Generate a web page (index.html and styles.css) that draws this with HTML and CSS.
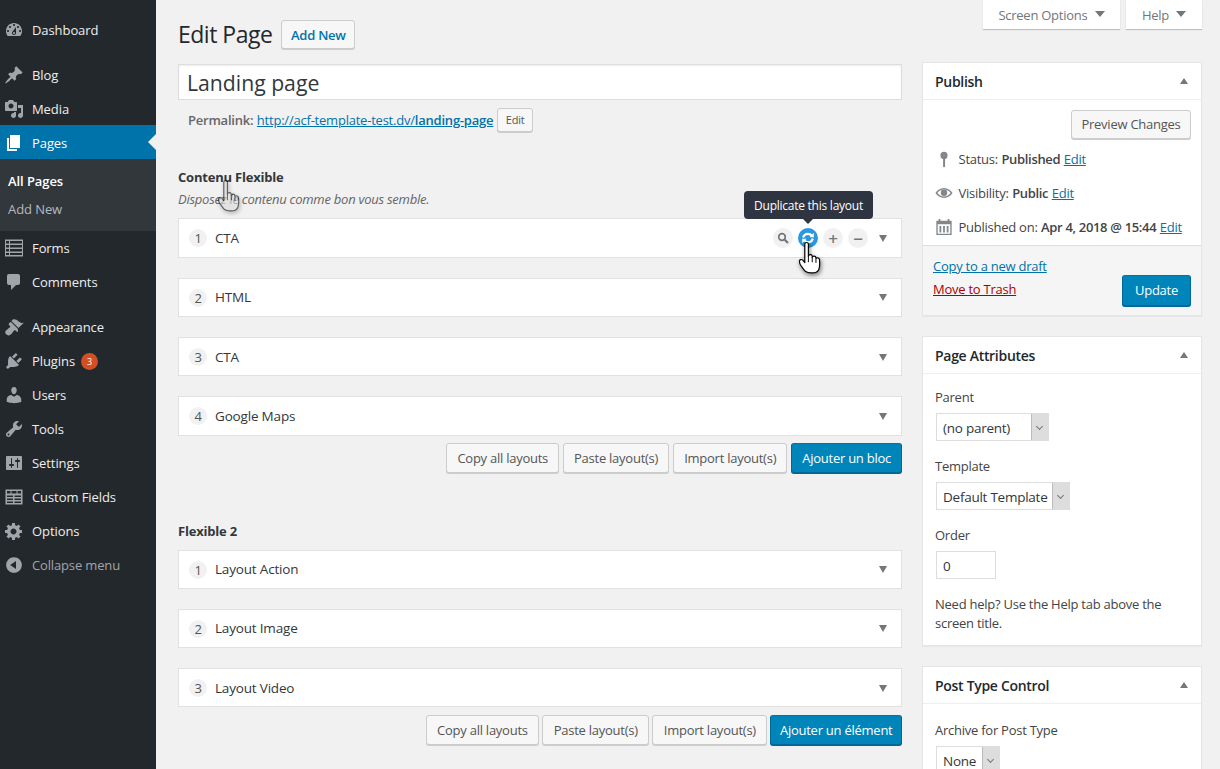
FILE: index.html
```html
<!DOCTYPE html>
<html lang="en">
<head>
<meta charset="UTF-8">
<title>Edit Page</title>
<link rel="stylesheet" href="styles.css">
</head>
<body>
<svg class="defs" width="0" height="0">
  <symbol id="i-dashboard" viewBox="0 0 20 20"><path fill-rule="evenodd" d="M3.76 16h12.48c1.1-1.37 1.76-3.11 1.76-5 0-4.42-3.58-8-8-8s-8 3.58-8 8c0 1.89.66 3.63 1.76 5zM10 4c.55 0 1 .45 1 1s-.45 1-1 1-1-.45-1-1 .45-1 1-1zM6 6c.55 0 1 .45 1 1s-.45 1-1 1-1-.45-1-1 .45-1 1-1zm8 0c.55 0 1 .45 1 1s-.45 1-1 1-1-.45-1-1 .45-1 1-1zm-5.37 5.55L12 7v6c0 1.1-.9 2-2 2s-2-.9-2-2c0-.57.24-1.08.63-1.45zM4 10c.55 0 1 .45 1 1s-.45 1-1 1-1-.45-1-1 .45-1 1-1zm12 0c.55 0 1 .45 1 1s-.45 1-1 1-1-.45-1-1 .45-1 1-1zm-5 3c0-.55-.45-1-1-1s-1 .45-1 1 .45 1 1 1 1-.45 1-1z"/></symbol>
  <symbol id="i-pin" viewBox="0 0 20 20"><path d="M10.44 3.02l1.82-1.82 6.36 6.35-1.83 1.82c-1.05-.68-2.48-.57-3.41.36l-.75.75c-.92.93-1.04 2.35-.35 3.41l-1.83 1.82-2.41-2.41-2.8 2.79c-.42.42-3.38 2.71-3.8 2.29s1.86-3.39 2.28-3.81l2.79-2.79L4.1 9.36l1.83-1.82c1.05.69 2.48.57 3.4-.36l.75-.75c.93-.92 1.05-2.35.36-3.41z"/></symbol>
  <symbol id="i-media" viewBox="0 0 20 20"><path fill-rule="evenodd" d="M13 11V4c0-.55-.45-1-1-1h-1.67L9 1H5L3.67 3H2c-.55 0-1 .45-1 1v7c0 .55.45 1 1 1h10c.55 0 1-.45 1-1zM7 4.5c1.38 0 2.5 1.12 2.5 2.5S8.38 9.5 7 9.5 4.5 8.38 4.5 7 5.62 4.5 7 4.5zM14 6h5v10.5c0 1.38-1.12 2.5-2.5 2.5S14 17.88 14 16.5s1.12-2.5 2.5-2.5c.17 0 .34.02.5.05V9h-3V6zm-4 8.05V13h2v3.5c0 1.38-1.12 2.5-2.5 2.5S7 17.88 7 16.5 8.12 14 9.5 14c.17 0 .34.02.5.05z"/></symbol>
  <symbol id="i-page" viewBox="0 0 20 20"><path d="M6 15V2h10v13H6zm-1 1h8v2H3V5h2v11z"/></symbol>
  <symbol id="i-forms" viewBox="0 0 20 20"><path fill-rule="evenodd" d="M1 1.500h18v17H1v-17zM2 3v2.500h3V3H2zm4 0v2.500h12V3H6zM2 7v2.500h3V7H2zm4 0v2.500h12V7H6zm-4 4v2.500h3V11H2zm4 0v2.500h12V11H6zm-4 4v2h3v-2H2zm4 0v2h12v-2H6z"/></symbol>
  <symbol id="i-comment" viewBox="0 0 20 20"><path d="M5 2h9c1.100 0 2 .9 2 2v7c0 1.100-.9 2-2 2h-2l-5 5v-5H5c-1.100 0-2-.9-2-2V4c0-1.100.9-2 2-2z"/></symbol>
  <symbol id="i-brush" viewBox="0 0 20 20"><path d="M14.480 11.060L7.410 3.990l1.500-1.500c.5-.56 2.300-.47 3.510.32 1.210.8 1.430 1.280 2.910 2.100 1.180.64 2.450 1.260 4.450.85zm-.71.71L6.700 4.700 4.930 6.470c-.39.39-.39 1.020 0 1.410l1.060 1.060c.39.39.39 1.030 0 1.420-.6.6-1.430 1.110-2.210 1.690-.35.26-.7.53-1.010.84C1.430 13.230.4 14.990 2.370 17.600c2.110 1.560 3.870.5 5.220-.85.31-.31.58-.66.84-1.010.58-.78 1.090-1.610 1.690-2.210.39-.39 1.030-.39 1.420 0l1.060 1.060c.39.39 1.020.39 1.410 0z"/></symbol>
  <symbol id="i-plugin" viewBox="0 0 20 20"><path d="M13.110 4.360L9.870 7.600 8 5.730l3.240-3.240c.35-.34 1.050-.2 1.560.32.52.51.66 1.210.31 1.550zm-8 1.770l.91-1.120 9.010 9.010-1.190.84c-.71.71-2.630 1.160-3.820 1.160H6.140L4.900 17.260c-.59.59-1.540.59-2.120 0-.59-.58-.59-1.530 0-2.120l1.240-1.240v-3.880c0-1.130.4-3.190 1.090-3.890zm7.260 3.970l3.240-3.240c.34-.35 1.040-.21 1.550.31.52.51.66 1.210.31 1.550l-3.240 3.250z"/></symbol>
  <symbol id="i-users" viewBox="0 0 20 20"><path d="M10 9.250c-2.270 0-2.730-3.440-2.730-3.440C7 4.020 7.820 2 9.970 2c2.160 0 2.980 2.020 2.710 3.810 0 0-.41 3.440-2.680 3.440zm0 2.570L12.720 10c2.390 0 4.520 2.330 4.520 4.530v2.490s-3.650 1.130-7.240 1.130c-3.650 0-7.240-1.130-7.240-1.130v-2.490c0-2.250 1.940-4.480 4.470-4.480z"/></symbol>
  <symbol id="i-tools" viewBox="0 0 20 20"><path fill-rule="evenodd" d="M16.680 9.770c-1.340 1.340-3.300 1.670-4.950.99l-5.410 6.520c-.99.99-2.590.99-3.580 0s-.99-2.590 0-3.570l6.520-5.420c-.68-1.650-.35-3.610.99-4.950 1.280-1.280 3.120-1.620 4.720-1.060l-2.890 2.890 2.820 2.820 2.860-2.870c.53 1.580.18 3.390-1.080 4.650zM3.810 16.210c.4.39 1.040.39 1.430 0 .4-.4.4-1.040 0-1.430-.39-.4-1.030-.4-1.430 0-.39.39-.39 1.030 0 1.430z"/></symbol>
  <symbol id="i-settings" viewBox="0 0 20 20"><path fill-rule="evenodd" d="M18 16V4c0-.55-.45-1-1-1H3c-.55 0-1 .45-1 1v12c0 .55.45 1 1 1h14c.55 0 1-.45 1-1zM8 11h1c.55 0 1 .45 1 1s-.45 1-1 1H8v1.500c0 .28-.22.5-.5.5s-.5-.22-.5-.5V13H6c-.55 0-1-.45-1-1s.45-1 1-1h1V5.500c0-.28.22-.5.5-.5s.5.22.5.5V11zm5-2h-1c-.55 0-1-.45-1-1s.45-1 1-1h1V5.500c0-.28.22-.5.5-.5s.5.22.5.5V7h1c.55 0 1 .45 1 1s-.45 1-1 1h-1v5.500c0 .28-.22.5-.5.5s-.5-.22-.5-.5V9z"/></symbol>
  <symbol id="i-fields" viewBox="0 0 20 20"><path fill-rule="evenodd" d="M1.500 2.500h17v15h-17v-15zm1.500 1.500v2.500h3.500V4H3zm4.500 0v2.500h5V4h-5zm6 0v2.500H17V4h-3.500zM3 8.500V10h6V8.500H3zm7.500 0V10H17V8.500h-6.500zM3 11.500V13h6v-1.500H3zm7.500 0V13H17v-1.500h-6.500zM3 14.500V16h6v-1.500H3zm7.500 0V16H17v-1.500h-6.500z"/></symbol>
  <symbol id="i-gear" viewBox="0 0 20 20"><path fill-rule="evenodd" d="M18 12h-2.180c-.17.7-.44 1.350-.81 1.930l1.540 1.540-2.100 2.100-1.540-1.540c-.58.36-1.230.63-1.910.79V19H8v-2.180c-.68-.16-1.330-.43-1.910-.79l-1.540 1.540-2.120-2.120 1.540-1.540c-.36-.58-.63-1.230-.79-1.910H1V9.030h2.170c.16-.7.44-1.350.8-1.940L2.430 5.550l2.100-2.100 1.540 1.540c.58-.37 1.240-.64 1.930-.81V2h3v2.180c.68.16 1.330.43 1.910.79l1.540-1.540 2.120 2.120-1.540 1.540c.36.59.64 1.240.8 1.940H18V12zm-8.500 1.500c1.660 0 3-1.340 3-3s-1.340-3-3-3-3 1.340-3 3 1.340 3 3 3z"/></symbol>
  <symbol id="i-collapse" viewBox="0 0 20 20"><path fill-rule="evenodd" d="M10 2.160c4.330 0 7.840 3.510 7.840 7.840s-3.510 7.840-7.840 7.840S2.160 14.330 2.160 10 5.710 2.160 10 2.160zm2 11.720V6.120L6.180 9.970z"/></symbol>
  <symbol id="i-hand" viewBox="0 0 20 28"><path fill="#fff" stroke="#000" stroke-width="1" stroke-linejoin="round" d="M6.500 2.500c0-1.900 3-1.900 3 0v10c.2-1.600 3-1.700 3.200 0v1c.2-1.500 2.900-1.500 3.100.2v1c.3-1.300 2.700-1.200 2.900.5.3 2.400.3 4.900-.2 7.300-.4 1.800-1.600 3.500-4 3.800-2.800.3-5.700.2-7.300-1-1.300-1.300-2.200-2.700-3.500-4.300-.9-1.200-1.700-3-1.700-4.300 0-1.500 1.700-1.900 2.800-.9l1.700 2V2.500z"/><path fill="none" stroke="#000" stroke-width=".8" d="M9.500 12.500v5M12.700 13.500v4M15.800 15v3"/></symbol>
</svg>

<div class="wrap">
  <nav class="sidebar">
    <a class="menu-item"><svg class="menu-icon"><use href="#i-dashboard"/></svg>Dashboard</a>
    <div class="menu-sep"></div>
    <a class="menu-item"><svg class="menu-icon"><use href="#i-pin"/></svg>Blog</a>
    <a class="menu-item"><svg class="menu-icon"><use href="#i-media"/></svg>Media</a>
    <a class="menu-item current"><svg class="menu-icon"><use href="#i-page"/></svg>Pages</a>
    <div class="submenu">
      <a class="sub-item active">All Pages</a>
      <a class="sub-item">Add New</a>
    </div>
    <a class="menu-item"><svg class="menu-icon"><use href="#i-forms"/></svg>Forms</a>
    <a class="menu-item"><svg class="menu-icon"><use href="#i-comment"/></svg>Comments</a>
    <div class="menu-sep"></div>
    <a class="menu-item"><svg class="menu-icon"><use href="#i-brush"/></svg>Appearance</a>
    <a class="menu-item"><svg class="menu-icon"><use href="#i-plugin"/></svg>Plugins <span class="update-count">3</span></a>
    <a class="menu-item"><svg class="menu-icon"><use href="#i-users"/></svg>Users</a>
    <a class="menu-item"><svg class="menu-icon"><use href="#i-tools"/></svg>Tools</a>
    <a class="menu-item"><svg class="menu-icon"><use href="#i-settings"/></svg>Settings</a>
    <a class="menu-item"><svg class="menu-icon"><use href="#i-fields"/></svg>Custom Fields</a>
    <a class="menu-item"><svg class="menu-icon"><use href="#i-gear"/></svg>Options</a>
    <a class="menu-item collapse"><svg class="menu-icon"><use href="#i-collapse"/></svg>Collapse menu</a>
  </nav>

  <main class="content">
    <div class="screen-tabs">
      <a class="screen-tab tab-options">Screen Options <i class="arrow-down"></i></a>
      <a class="screen-tab tab-help">Help <i class="arrow-down"></i></a>
    </div>

    <div class="page-head">
      <h1>Edit Page</h1>
      <a class="btn add-new">Add New</a>
    </div>

    <div class="columns">
      <div class="col-main">
        <input class="title-input" type="text" value="Landing page">
        <div class="permalink">
          <b>Permalink:</b> <a class="link" href="#">http://acf-template-test.dv/<b>landing-page</b></a>
          <a class="btn btn-small">Edit</a>
        </div>

        <section class="flex-field first">
          <h3>Contenu Flexible</h3>
          <p class="field-desc">Disposez le contenu comme bon vous semble.</p>
          <div class="layout-row">
            <span class="num">1</span><span class="layout-name">CTA</span>
            <div class="row-actions">
              <span class="round"><svg width="12" height="12" viewBox="0 0 12 12"><circle cx="5" cy="5" r="3.300" fill="none" stroke="#72777c" stroke-width="1.700"/><path d="M7.500 7.500l3.500 3.500" stroke="#72777c" stroke-width="2.200"/></svg></span>
              <span class="round hot"><svg width="14" height="14" viewBox="0 0 14 14"><path fill="none" stroke="#fff" stroke-width="2.200" d="M2.200 6.500C2.800 4 4.700 2.800 7 2.800c1.700 0 3 .8 3.900 2M11.800 7.500c-.6 2.500-2.500 3.700-4.800 3.700-1.700 0-3-.8-3.900-2"/><path fill="#fff" d="M8.500 6.300h4.300V1.800zM5.500 7.700H1.200v4.500z"/></svg></span>
              <span class="round sign">+</span>
              <span class="round sign">&minus;</span>
            </div>
            <i class="caret"></i>
          </div>
          <div class="layout-row"><span class="num">2</span><span class="layout-name">HTML</span><i class="caret"></i></div>
          <div class="layout-row"><span class="num">3</span><span class="layout-name">CTA</span><i class="caret"></i></div>
          <div class="layout-row"><span class="num">4</span><span class="layout-name">Google Maps</span><i class="caret"></i></div>
          <div class="field-buttons">
            <a class="btn">Copy all layouts</a>
            <a class="btn">Paste layout(s)</a>
            <a class="btn">Import layout(s)</a>
            <a class="btn btn-primary">Ajouter un bloc</a>
          </div>
        </section>

        <section class="flex-field second">
          <h3>Flexible 2</h3>
          <div class="layout-row"><span class="num">1</span><span class="layout-name">Layout Action</span><i class="caret"></i></div>
          <div class="layout-row"><span class="num">2</span><span class="layout-name">Layout Image</span><i class="caret"></i></div>
          <div class="layout-row"><span class="num">3</span><span class="layout-name">Layout Video</span><i class="caret"></i></div>
          <div class="field-buttons">
            <a class="btn">Copy all layouts</a>
            <a class="btn">Paste layout(s)</a>
            <a class="btn">Import layout(s)</a>
            <a class="btn btn-primary">Ajouter un élément</a>
          </div>
        </section>
      </div>

      <aside class="col-side">
        <div class="postbox publish">
          <div class="box-head"><h2>Publish</h2><i class="caret-up"></i></div>
          <div class="publish-body">
            <div class="preview-line"><a class="btn">Preview Changes</a></div>
            <div class="misc"><svg class="misc-icon" viewBox="0 0 20 20"><circle cx="10" cy="6" r="4"/><rect x="9" y="8" width="2.200" height="11"/></svg>Status: <b>Published</b> <a class="link" href="#">Edit</a></div>
            <div class="misc"><svg class="misc-icon" viewBox="0 0 20 20"><path fill-rule="evenodd" d="M10 4.500c4 0 7.500 2.500 9.500 5.500-2 3-5.500 5.500-9.500 5.500S2.500 13 .5 10c2-3 5.500-5.500 9.500-5.500zm0 1.700c-3 0-5.700 1.600-7.400 3.800C4.300 12.200 7 13.800 10 13.800s5.700-1.600 7.400-3.800C15.700 7.800 13 6.200 10 6.200z"/><circle cx="10" cy="9.800" r="3.600"/></svg>Visibility: <b>Public</b> <a class="link" href="#">Edit</a></div>
            <div class="misc"><svg class="misc-icon" viewBox="0 0 20 20"><path fill-rule="evenodd" d="M1.500 3H4V1h2v2h8V1h2v2h2.500v16h-17V3zM3 7v10.500h14V7H3zm2 2h2v7H5V9zm4 0h2v7H9V9zm4 0h2v7h-2V9z"/></svg>Published on: <b>Apr 4, 2018 @ 15:44</b> <a class="link" href="#">Edit</a></div>
          </div>
          <div class="publish-foot">
            <div class="foot-links">
              <a class="link" href="#">Copy to a new draft</a>
              <a class="link trash" href="#">Move to Trash</a>
            </div>
            <a class="btn btn-primary update">Update</a>
          </div>
        </div>

        <div class="postbox attributes">
          <div class="box-head"><h2>Page Attributes</h2><i class="caret-up"></i></div>
          <div class="box-body">
            <p class="label">Parent</p>
            <div class="fake-select w-parent"><span>(no parent)</span><i class="select-arrow"></i></div>
            <p class="label">Template</p>
            <div class="fake-select w-template"><span>Default Template</span><i class="select-arrow"></i></div>
            <p class="label">Order</p>
            <input class="order-input" type="text" value="0">
            <p class="help-text">Need help? Use the Help tab above the screen title.</p>
          </div>
        </div>

        <div class="postbox type-control">
          <div class="box-head"><h2>Post Type Control</h2><i class="caret-up"></i></div>
          <div class="box-body">
            <p class="label">Archive for Post Type</p>
            <div class="fake-select w-none"><span>None</span><i class="select-arrow"></i></div>
          </div>
        </div>
      </aside>
    </div>
  </main>
</div>

<!-- overlays -->
<div class="tooltip">Duplicate this layout</div>
<svg class="cursor cursor-main"><use href="#i-hand"/></svg>
<svg class="cursor cursor-ghost"><use href="#i-hand"/></svg>
</body>
</html>
```

FILE: styles.css
```css
html, body {
  margin: 0;
  height: 769px;
  overflow: hidden;
}

body {
  background: #f1f1f1;
  color: #444;
  font-family: "Open Sans", sans-serif;
  font-size: 13px;
  letter-spacing: -0.25px;
  line-height: 19px;
  position: relative;
}

.defs {
  position: absolute;
}

a {
  text-decoration: none;
}

p, h1, h2, h3 {
  margin: 0;
}

b {
  font-weight: 600;
}

.wrap {
  display: flex;
  height: 769px;
}

/* sidebar */
.sidebar {
  width: 156px;
  flex-shrink: 0;
  background: #23282d;
  padding-top: 13px;
  box-sizing: border-box;
  letter-spacing: -0.08px;
}

.menu-item {
  display: flex;
  align-items: center;
  height: 34px;
  color: #eee;
  position: relative;
}

.menu-icon {
  width: 20px;
  height: 20px;
  margin: 0 8px 0 4px;
  fill: #a0a5aa;
  flex-shrink: 0;
}

.menu-sep {
  height: 11px;
}

.menu-item.current {
  background: #0073aa;
  color: #fff;
  margin-top: -1px;
  padding-top: 2px;
  box-sizing: border-box;
}

.menu-item.current .menu-icon {
  fill: #fff;
}

.menu-item.current::after {
  content: "";
  position: absolute;
  right: 0;
  top: 9px;
  border: 8px solid transparent;
  border-right-color: #f1f1f1;
  border-left-width: 0;
}

.submenu {
  background: #32373c;
  height: 72px;
  padding-top: 8px;
  box-sizing: border-box;
}

.sub-item {
  display: block;
  height: 28px;
  line-height: 28px;
  padding-left: 8px;
  color: #b4b9be;
}

.sub-item.active {
  color: #fff;
  font-weight: 600;
}

.update-count {
  display: inline-block;
  width: 17px;
  height: 17px;
  border-radius: 50%;
  background: #d54e21;
  color: #fff;
  font-size: 9px;
  line-height: 17px;
  text-align: center;
  margin-left: 6px;
}

.collapse {
  color: #a0a5aa;
  letter-spacing: -0.15px;
}

/* main area */
.content {
  flex: 1;
  padding: 0 18px 0 22px;
  min-width: 0;
}

.screen-tabs {
  display: flex;
  justify-content: flex-end;
  gap: 6px;
  height: 20px;
  position: relative;
}

.screen-tab {
  position: absolute;
  top: 0;
  height: 29px;
  box-sizing: border-box;
  padding-top: 6px;
  background: #fff;
  color: #72777c;
  box-shadow: 0 1px 1px rgba(0,0,0,.2);
  text-align: center;
  white-space: nowrap;
}

.tab-options {
  right: 82px;
  width: 137px;
}

.tab-help {
  right: 0;
  width: 76px;
}

.arrow-down {
  display: inline-block;
  border: 5px solid transparent;
  border-top: 6px solid #72777c;
  border-bottom: 0;
  margin: 0 0 3px 4px;
}

.page-head {
  display: flex;
  align-items: center;
  height: 29px;
  margin-bottom: 15px;
}

h1 {
  font-size: 23px;
  font-weight: 400;
  color: #23282d;
  margin-right: 9px;
  letter-spacing: -0.5px;
}

.btn {
  display: inline-block;
  box-sizing: border-box;
  height: 30px;
  line-height: 28px;
  padding: 0 10px;
  border: 1px solid #ccc;
  border-radius: 3px;
  background: #f7f7f7;
  box-shadow: 0 1px 0 #ccc;
  color: #555;
  white-space: nowrap;
}

.add-new {
  color: #0073aa;
  background: #f7f7f7;
  font-weight: 600;
  height: 29px;
  line-height: 28px;
  width: 74px;
  padding: 0;
  text-align: center;
}

.btn-primary {
  background: #0085ba;
  border-color: #0073aa #006799 #006799;
  box-shadow: 0 1px 0 #006799;
  color: #fff;
}

.btn-small {
  height: 24px;
  line-height: 22px;
  padding: 0 8px;
  font-size: 11px;
}

.columns {
  display: flex;
  gap: 20px;
}

.col-main {
  width: 724px;
  flex-shrink: 0;
}

.col-side {
  width: 280px;
  flex-shrink: 0;
  margin-top: -2px;
}

.title-input {
  display: block;
  width: 100%;
  height: 36px;
  box-sizing: border-box;
  border: 1px solid #ddd;
  box-shadow: inset 0 1px 2px rgba(0,0,0,.07);
  padding: 0 8px;
  font: 400 21.2px "Open Sans", sans-serif;
  color: #32373c;
  background: #fff;
  outline: 0;
}

.permalink {
  display: flex;
  align-items: center;
  gap: 3.5px;
  height: 24px;
  margin-top: 8px;
  padding-left: 10px;
  color: #666;
  letter-spacing: -0.22px;
}

.link {
  color: #0073aa;
  text-decoration: underline;
}

.flex-field h3 {
  font-size: 13px;
  font-weight: 700;
  color: #32373c;
  letter-spacing: -0.2px;
}

.first {
  margin-top: 36px;
}

.second {
  margin-top: 49px;
}

.field-desc {
  font-style: italic;
  color: #666;
  margin: 3px 0 9.2px;
  height: 19px;
}

.second h3 {
  margin-bottom: 9px;
}

.layout-row {
  display: flex;
  align-items: center;
  height: 39.33px;
  box-sizing: border-box;
  background: #fff;
  border: 1px solid #e1e1e1;
  margin-bottom: 20px;
  padding: 1px 14px 0 10px;
  color: #32373c;
}

.field-buttons {
  display: flex;
  justify-content: flex-end;
  gap: 4px;
  margin-top: -13px;
}

.second .field-buttons {
  gap: 3px;
  margin-top: -12px;
}

.second .btn {
  padding: 0 10.5px;
}

.second .btn-primary {
  padding: 0 8.5px;
}

.num {
  width: 18px;
  height: 18px;
  border-radius: 50%;
  background: #f1f1f1;
  text-align: center;
  line-height: 18px;
  font-size: 13px;
  color: #555;
  margin-right: 8px;
}

.layout-name {
  flex: 1;
  font-size: 13.5px;
  letter-spacing: -0.18px;
}

.row-actions {
  display: flex;
  gap: 5px;
  margin-right: 11px;
}

.round {
  display: flex;
  align-items: center;
  justify-content: center;
  width: 20px;
  height: 20px;
  border-radius: 50%;
  background: #f1f1f1;
}

.round.hot {
  background: #2b98de;
}

.round.sign {
  color: #72777c;
  font-size: 17px;
  font-weight: 600;
}

.caret {
  width: 0;
  border: 4.5px solid transparent;
  border-top: 7px solid #72777c;
  border-bottom: 0;
}

/* side boxes */
.postbox {
  background: #fff;
  border: 1px solid #e5e5e5;
  box-shadow: 0 1px 1px rgba(0,0,0,.04);
  margin-bottom: 20px;
}

.box-head {
  display: flex;
  align-items: center;
  justify-content: space-between;
  height: 36px;
  padding: 0 13px 0 12px;
  border-bottom: 1px solid #eee;
}

h2 {
  font-size: 14px;
  font-weight: 600;
  color: #23282d;
  letter-spacing: -0.3px;
}

.caret-up {
  border: 4.5px solid transparent;
  border-bottom: 6px solid #72777c;
  border-top: 0;
}

.publish-body {
  padding: 10px 10px 0 12px;
  height: 145px;
  box-sizing: border-box;
}

.preview-line {
  display: flex;
  justify-content: flex-end;
  margin-bottom: 3px;
}

.preview-line .btn {
  height: 29px;
  line-height: 27px;
  width: 120px;
  padding: 0;
  text-align: center;
}

.misc {
  display: flex;
  align-items: center;
  gap: 3.5px;
  height: 34px;
  white-space: nowrap;
}

.misc b {
  letter-spacing: -0.33px;
}

.misc-icon {
  width: 18px;
  height: 18px;
  fill: #82878c;
  margin-right: 2px;
  flex-shrink: 0;
}

.publish-foot {
  display: flex;
  justify-content: space-between;
  align-items: flex-end;
  height: 70px;
  box-sizing: border-box;
  padding: 0 10px 9px;
  background: #f5f5f5;
  border-top: 1px solid #ddd;
}

.foot-links {
  display: flex;
  flex-direction: column;
  gap: 4px;
  align-self: flex-start;
  padding-top: 11px;
}

.trash {
  color: #a00;
}

.update {
  width: 69px;
  height: 31px;
  padding: 0;
  text-align: center;
}

.box-body {
  padding: 14px 12px 0;
}

.type-control .box-body {
  padding-top: 17px;
}

.label {
  margin-bottom: 6px;
}

.fake-select {
  display: flex;
  justify-content: space-between;
  align-items: center;
  box-sizing: border-box;
  height: 28px;
  background: #fff;
  border: 1px solid #ddd;
  padding-left: 6px;
  margin: 0 0 16px 1px;
  font-size: 13.5px;
  color: #32373c;
}

.fake-select span {
  padding-top: 3px;
}

.w-parent { width: 113px; }
.w-template { width: 134px; }
.w-none { width: 64px; }

.select-arrow {
  width: 16px;
  height: 26px;
  background: #ddd;
  border-left: 1px solid #bbb;
  position: relative;
}

.select-arrow::after {
  content: "";
  position: absolute;
  left: 5px;
  top: 10px;
  width: 4px;
  height: 4px;
  border-right: 1px solid #777;
  border-bottom: 1px solid #777;
  transform: rotate(45deg);
}

.order-input {
  display: block;
  width: 60px;
  height: 28px;
  box-sizing: border-box;
  border: 1px solid #ddd;
  padding: 2px 6px 0;
  font: 13.5px "Open Sans", sans-serif;
  color: #32373c;
  margin: 0 0 16px 1px;
  outline: 0;
}

.help-text {
  width: 250px;
  height: 40px;
  line-height: 18.5px;
}

.attributes {
  height: 310px;
  box-sizing: border-box;
}

/* things over the page */
.tooltip {
  position: absolute;
  left: 744px;
  top: 191px;
  height: 28px;
  width: 129px;
  background: #2e3440;
  border-radius: 4px;
  color: #fff;
  font-size: 12px;
  line-height: 29px;
  text-align: center;
}

.tooltip::after {
  content: "";
  position: absolute;
  left: 59px;
  bottom: -5px;
  border: 5px solid transparent;
  border-top-color: #2e3440;
  border-bottom: 0;
}

.cursor {
  position: absolute;
  width: 24px;
  height: 34px;
}

.cursor-main {
  left: 797px;
  top: 241px;
  filter: drop-shadow(1px 2px 2px rgba(0,0,0,.5));
}

.cursor-ghost {
  left: 216px;
  top: 179px;
  opacity: .6;
  filter: brightness(.85) drop-shadow(1px 2px 2px rgba(0,0,0,.4));
}
```
